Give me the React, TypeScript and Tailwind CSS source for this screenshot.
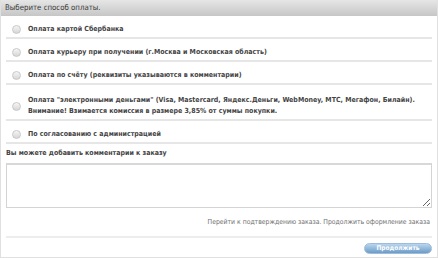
import React, { useState } from 'react';

const options = [
  ['Оплата картой Сбербанка'],
  ['Оплата курьеру при получении (г.Москва и Московская область)'],
  ['Оплата по счёту (реквизиты указываются в комментарии)'],
  [
    'Оплата "электронными деньгами" (Visa, Mastercard, Яндекс.Деньги, WebMoney, МТС, Мегафон, Билайн).',
    'Внимание! Взимается комиссия в размере 3,85% от суммы покупки.',
  ],
  ['По согласованию с администрацией'],
];

const Radio = ({ checked }: { checked: boolean }) => (
  <span className="w-[9px] h-[9px] shrink-0 rounded-full border border-[#c8c8c8] bg-gradient-to-b from-[#f6f6f6] to-[#d6d6d6] flex items-center justify-center">
    {checked && <span className="w-[3px] h-[3px] rounded-full bg-[#555]" />}
  </span>
);

const App = () => {
  const [selected, setSelected] = useState(-1);
  const [comment, setComment] = useState('');

  return (
    <div className="w-[438px] h-[258px] bg-white font-['DejaVu_Sans_Condensed','DejaVu_Sans',sans-serif] text-[#444] overflow-hidden">
      <div className="h-full border-x border-b border-[#e0e0e0] flex flex-col">
        {/* Header */}
        <div className="h-[16px] shrink-0 bg-gradient-to-b from-[#e6e6e6] to-[#c6c6c6] px-[4px] flex items-center text-[7.8px] text-[#383838]">
          Выберите способ оплаты.
        </div>

        {/* Options */}
        <div className="px-[5px]">
          {options.map((lines, i) => (
            <label
              key={i}
              onClick={() => setSelected(i)}
              className={`flex items-center gap-[7px] pl-[6px] pb-[2px] border-b-2 border-[#e6e6e6] cursor-pointer ${
                lines.length > 1 ? 'pt-[10px]' : 'pt-[8px]'
              }`}
            >
              <Radio checked={selected === i} />
              <span className="text-[7px] leading-[11px] font-bold">
                {lines.map((l) => (
                  <span key={l} className="block">{l}</span>
                ))}
              </span>
            </label>
          ))}
        </div>

        {/* Comment */}
        <div className="px-[5px] pt-[4px]">
          <div className="text-[7px] leading-[11px] font-bold mb-[4px]">
            Вы можете добавить комментарии к заказу
          </div>
          <textarea
            value={comment}
            onChange={(e) => setComment(e.target.value)}
            className="block w-[426px] h-[45px] border border-[#d4d4d4] border-t-2 border-t-[#d8d8d8] resize-y outline-none text-[8px] p-1"
          />
        </div>

        <div className="px-[7px] pt-[10px] leading-[9px] flex justify-end text-[6.8px] text-[#707070]">
          Перейти к подтверждению заказа. Продолжить оформление заказа
        </div>

        <div className="mx-[5px] mt-[9px] border-t-2 border-[#ededed] pt-[5px] flex justify-end">
          <button className="w-[68px] h-[11px] rounded-full bg-gradient-to-b from-[#b9d6ee] to-[#6c9cc7] border border-[#9cbcd9] text-white text-[6.5px] font-bold leading-none flex items-center justify-center">
            Продолжить
          </button>
        </div>
      </div>
    </div>
  );
};

export default App;
